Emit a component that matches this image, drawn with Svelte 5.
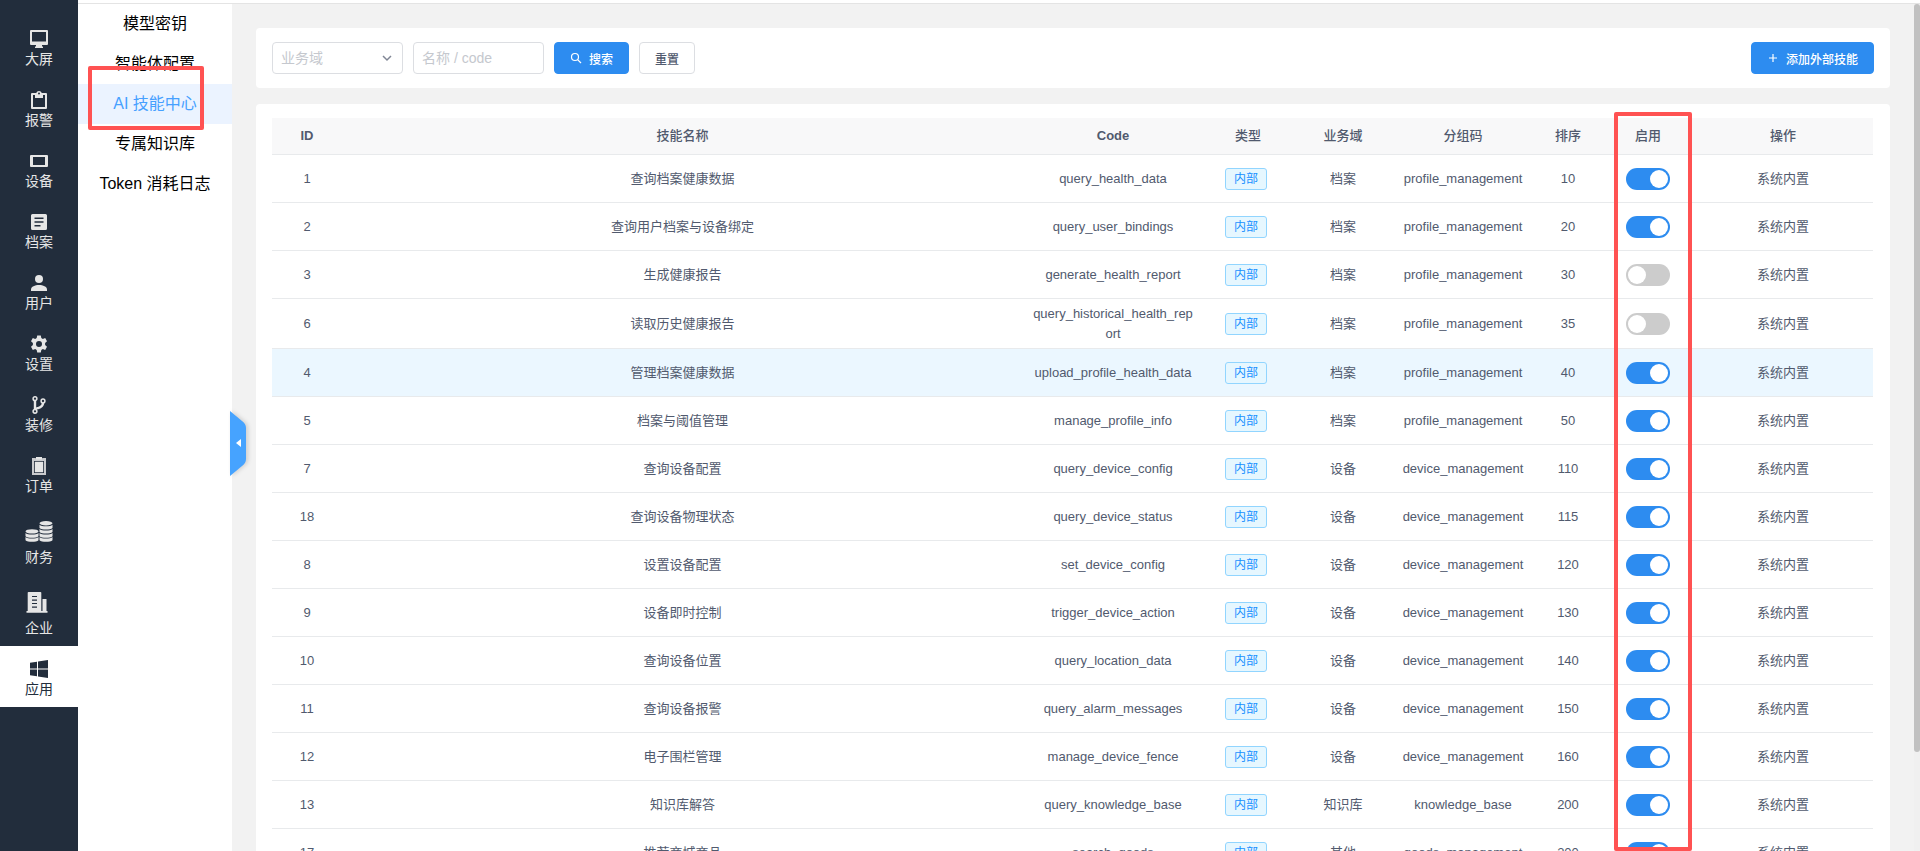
<script lang="ts">
  type Skill = {
    id: number;
    name: string;
    code: string;
    domain: string;
    group: string;
    sort: number;
    enabled: boolean;
  };

  const mainMenu = [
    { label: '大屏', icon: 'screen' },
    { label: '报警', icon: 'alarm' },
    { label: '设备', icon: 'device' },
    { label: '档案', icon: 'archive' },
    { label: '用户', icon: 'user' },
    { label: '设置', icon: 'setting' },
    { label: '装修', icon: 'branch' },
    { label: '订单', icon: 'order' },
    { label: '财务', icon: 'finance', large: true },
    { label: '企业', icon: 'company', large: true },
    { label: '应用', icon: 'app' }
  ];
  const subMenu = ['模型密钥', '智能体配置', 'AI 技能中心', '专属知识库', 'Token 消耗日志'];

  let activeMain = '应用';
  let activeSub = 'AI 技能中心';
  let domain = '';
  let keyword = '';
  let hoverId = 4;

  const profile = { domain: '档案', group: 'profile_management' };
  const device = { domain: '设备', group: 'device_management' };

  let skills: Skill[] = [
    { id: 1, name: '查询档案健康数据', code: 'query_health_data', ...profile, sort: 10, enabled: true },
    { id: 2, name: '查询用户档案与设备绑定', code: 'query_user_bindings', ...profile, sort: 20, enabled: true },
    { id: 3, name: '生成健康报告', code: 'generate_health_report', ...profile, sort: 30, enabled: false },
    { id: 6, name: '读取历史健康报告', code: 'query_historical_health_report', ...profile, sort: 35, enabled: false },
    { id: 4, name: '管理档案健康数据', code: 'upload_profile_health_data', ...profile, sort: 40, enabled: true },
    { id: 5, name: '档案与阈值管理', code: 'manage_profile_info', ...profile, sort: 50, enabled: true },
    { id: 7, name: '查询设备配置', code: 'query_device_config', ...device, sort: 110, enabled: true },
    { id: 18, name: '查询设备物理状态', code: 'query_device_status', ...device, sort: 115, enabled: true },
    { id: 8, name: '设置设备配置', code: 'set_device_config', ...device, sort: 120, enabled: true },
    { id: 9, name: '设备即时控制', code: 'trigger_device_action', ...device, sort: 130, enabled: true },
    { id: 10, name: '查询设备位置', code: 'query_location_data', ...device, sort: 140, enabled: true },
    { id: 11, name: '查询设备报警', code: 'query_alarm_messages', ...device, sort: 150, enabled: true },
    { id: 12, name: '电子围栏管理', code: 'manage_device_fence', ...device, sort: 160, enabled: true },
    { id: 13, name: '知识库解答', code: 'query_knowledge_base', domain: '知识库', group: 'knowledge_base', sort: 200, enabled: true },
    { id: 17, name: '推荐商城商品', code: 'search_goods', domain: '其他', group: 'goods_management', sort: 200, enabled: true }
  ];

  function resetFilter() {
    domain = '';
    keyword = '';
  }
</script>

<div class="layout">
  <nav class="main-nav">
    {#each mainMenu as item}
      <a href="#{item.icon}" class="main-item" class:active={item.label === activeMain} on:click={() => (activeMain = item.label)}>
        <svg class:large={item.large} viewBox={item.large ? '0 0 28 28' : '0 0 18 18'} aria-hidden="true">
          {#if item.icon === 'screen'}
            <path fill-rule="evenodd" d="M1 0h16a1 1 0 0 1 1 1v13a1 1 0 0 1-1 1h-5v1l1 1v1H5v-1l1-1v-1H1a1 1 0 0 1-1-1V1a1 1 0 0 1 1-1zM2 2v9.500h14V2z" />
          {:else if item.icon === 'alarm'}
            <path fill-rule="evenodd" d="M2 2h4.200a3 3 0 0 1 5.600 0H16a1 1 0 0 1 1 1v14a1 1 0 0 1-1 1H2a1 1 0 0 1-1-1V3a1 1 0 0 1 1-1zM3 4v12h12V4h-2v3H5V4zM9 1.500a1 1 0 1 0 0 2 1 1 0 0 0 0-2z" />
          {:else if item.icon === 'device'}
            <path fill-rule="evenodd" d="M1 3h16a1 1 0 0 1 1 1v10a1 1 0 0 1-1 1H1a1 1 0 0 1-1-1V4a1 1 0 0 1 1-1zM3 5v8h12V5z" />
          {:else if item.icon === 'archive'}
            <path fill-rule="evenodd" d="M2.500 1h13A1.500 1.500 0 0 1 17 2.500v13a1.500 1.500 0 0 1-1.500 1.500h-13A1.500 1.500 0 0 1 1 15.500v-13A1.500 1.500 0 0 1 2.500 1zM4.500 4.500V6h9V4.500zM4.500 8.300v1.500h9V8.300zM4.500 12v1.500h6V12z" />
          {:else if item.icon === 'user'}
            <circle cx="9" cy="5" r="4" />
            <path d="M1 17v-1.500C1 12.500 5 11 9 11s8 1.500 8 4.500V17z" />
          {:else if item.icon === 'setting'}
            <path fill-rule="evenodd" d="M7.200 .5h3.600l.5 2.500 1.500.9 2.400-.8L17 6.200l-1.900 1.700v2.200l1.900 1.700-1.800 3.100-2.400-.8-1.500.9-.5 2.500H7.200L6.700 15l-1.500-.9-2.400.8L1 11.800l1.900-1.700V7.900L1 6.200l1.800-3.100 2.400.8L6.700 3zM9 6a3 3 0 1 0 0 6 3 3 0 0 0 0-6z" />
          {:else if item.icon === 'branch'}
            <g fill="none" stroke="currentColor" stroke-width="1.500">
              <circle cx="5" cy="2.700" r="1.900" />
              <circle cx="5" cy="15.300" r="1.900" />
              <circle cx="13" cy="5" r="1.900" />
              <path stroke-width="2.400" d="M5 4.600v8.800M13 7c0 4-3 4.500-5.500 5.200-1.500.4-2.200.8-2.500 1.500" />
            </g>
          {:else if item.icon === 'order'}
            <path fill-rule="evenodd" d="M2 1h3.500l1 1h5l1-1H16v17H2zM4 4v12h10V4z" opacity=".85" />
            <path d="M4.800 4.800h8.400v10.400H4.800zM6 0h6v2.500H6z" />
          {:else if item.icon === 'finance'}
            <ellipse cx="21" cy="5.200" rx="6.500" ry="2.200" />
            <path d="M14.500 6.800c2 2 11 2 13 0v3.200c-2 2-11 2-13 0zM14.500 10.900c2 2 11 2 13 0v3.200c-2 2-11 2-13 0zM14.500 15c2 2 11 2 13 0v3.200c-2 2-11 2-13 0zM14.500 19.100c2 2 11 2 13 0v3.200c-2 2-11 2-13 0z" />
            <ellipse cx="7" cy="13.400" rx="6.500" ry="2.200" />
            <path d="M.5 15c2 2 11 2 13 0v3.200c-2 2-11 2-13 0zM.5 19.100c2 2 11 2 13 0v3.200c-2 2-11 2-13 0z" />
          {:else if item.icon === 'company'}
            <path fill-rule="evenodd" d="M3.500 3h12a.8.8 0 0 1 .8.8V22.500H2.700V3.800a.8.8 0 0 1 .8-.8zM7 7v1h5V7zM7 10.500v1.200h5v-1.200zM7 14v1h5v-1zM7 17.500v1.200h5v-1.200z" />
            <path d="M17.500 10h4v12.500h-4zM1.500 22h21v1.700h-21z" />
          {:else}
            <path d="M0 2.700l7-1v6.800H0zM8 1.500L18 0v8.500H8zM0 9.500h7v6.700l-7-1zM8 9.500h10V18L8 16.400z" />
          {/if}
        </svg>
        <span>{item.label}</span>
      </a>
    {/each}
  </nav>

  <div class="page">
    <header class="topbar"></header>
    <div class="body">
      <aside class="sub-nav">
        {#each subMenu as item}
          <a href="#sub" class="sub-item" class:active={item === activeSub} on:click={() => (activeSub = item)}>
            {item}
            {#if item === 'AI 技能中心'}<i class="mark mark-menu"></i>{/if}
          </a>
        {/each}
        <button class="collapse" aria-label="收起菜单">
          <svg viewBox="0 0 16 65" aria-hidden="true">
            <path fill="#46a3ff" d="M0 0l12 10q4 3 4 7v31q0 4-4 7L0 65z" />
            <path fill="#fff" d="M11 28v8l-5-4z" />
          </svg>
        </button>
      </aside>

      <main class="content">
        <section class="card filter">
          <div class="field select-box">
            <select aria-label="业务域" bind:value={domain} class:empty={!domain}>
              <option value="">业务域</option>
              <option>档案</option>
              <option>设备</option>
              <option>知识库</option>
              <option>其他</option>
            </select>
            <svg viewBox="0 0 10 10" aria-hidden="true"><path d="M1 3l4 4 4-4" /></svg>
          </div>
          <input class="field" type="text" aria-label="名称 / code" placeholder="名称 / code" bind:value={keyword} />
          <button class="btn primary">
            <svg viewBox="0 0 12 12" aria-hidden="true"><circle cx="5" cy="5" r="3.500" /><path d="M7.600 7.600L11 11" /></svg>
            <span>搜索</span>
          </button>
          <button class="btn" on:click={resetFilter}>重置</button>
          <button class="btn primary add">
            <svg viewBox="0 0 12 12" aria-hidden="true"><path d="M6 2v8M2 6h8" /></svg>
            <span>添加外部技能</span>
          </button>
        </section>

        <section class="card list">
          <table>
            <colgroup>
              <col class="w70" /><col /><col class="w180" /><col class="w90" /><col class="w100" />
              <col class="w140" /><col class="w70" /><col class="w90" /><col class="w180" />
            </colgroup>
            <thead>
              <tr>
                <th class="latin">ID</th>
                <th>技能名称</th>
                <th class="latin">Code</th>
                <th>类型</th>
                <th>业务域</th>
                <th>分组码</th>
                <th>排序</th>
                <th>启用</th>
                <th>操作</th>
              </tr>
            </thead>
            <tbody>
              {#each skills as skill (skill.id)}
                <tr class:hover={skill.id === hoverId} on:mouseenter={() => (hoverId = skill.id)}>
                  <td>{skill.id}</td>
                  <td>{skill.name}</td>
                  <td class="code">{skill.code}</td>
                  <td><span class="tag">内部</span></td>
                  <td>{skill.domain}</td>
                  <td class="group">{skill.group}</td>
                  <td>{skill.sort}</td>
                  <td><input class="switch" type="checkbox" role="switch" aria-label="启用 {skill.name}" bind:checked={skill.enabled} /></td>
                  <td>系统内置</td>
                </tr>
              {/each}
            </tbody>
          </table>
          <i class="mark mark-column"></i>
        </section>
      </main>

      <div class="scrollbar" aria-hidden="true"><div class="thumb"></div></div>
    </div>
  </div>
</div>

<style>
  :global(body) {
    margin: 0;
    font-family: "Liberation Sans", "Noto Sans CJK SC", sans-serif;
    color: #515a6e;
  }

  .layout, .layout * { box-sizing: border-box; }

  .layout {
    display: flex;
    height: 100vh;
    overflow: hidden;
    background: #f2f2f2;
  }

  a { text-decoration: none; }

  .main-nav {
    flex: none;
    width: 78px;
    padding-top: 16px;
    background: #222d3c;
  }

  .main-item {
    display: flex;
    flex-direction: column;
    align-items: center;
    padding: 14px 0 7px;
    font-size: 14px;
    line-height: 22px;
    color: #e6e6e6;
  }

  .main-item.active {
    background: #fff;
    color: #222d3c;
  }

  .main-item svg {
    width: 18px;
    height: 18px;
    fill: currentColor;
  }

  .main-item svg.large {
    width: 28px;
    height: 28px;
  }

  .page {
    flex: 1;
    min-width: 0;
    display: flex;
    flex-direction: column;
  }

  .topbar {
    flex: none;
    height: 4px;
    background: #fff;
    border-bottom: 1px solid #e4e4e4;
  }

  .body {
    flex: 1;
    min-height: 0;
    display: flex;
  }

  .sub-nav {
    position: relative;
    flex: none;
    width: 154px;
    background: #fff;
  }

  .sub-item {
    position: relative;
    display: block;
    font-size: 16px;
    line-height: 40px;
    text-align: center;
    color: #000;
  }

  .sub-item.active {
    background: #ebf3ff;
    color: #46a0ff;
  }

  .mark {
    position: absolute;
    border: 4px solid #ff5252;
    border-radius: 2px;
    pointer-events: none;
    z-index: 2;
  }

  .mark-menu {
    inset: -18px 28px -6px 10px;
  }

  .mark-column {
    top: 8px;
    right: 198px;
    width: 78px;
    height: calc(100vh - 112px);
  }

  .collapse {
    position: absolute;
    top: 407px;
    right: -14px;
    width: 16px;
    height: 65px;
    padding: 0;
    border: 0;
    background: none;
    cursor: pointer;
  }

  .collapse svg {
    display: block;
    width: 16px;
    height: 65px;
    overflow: visible;
    filter: drop-shadow(2px 0 2px rgba(0, 0, 0, 0.15));
  }

  .content {
    flex: 1;
    min-width: 0;
    padding: 24px;
    overflow: hidden;
  }

  .card {
    background: #fff;
    border-radius: 4px;
  }

  .filter {
    display: flex;
    gap: 10px;
    padding: 14px 16px;
    margin-bottom: 16px;
  }

  .field {
    width: 131px;
    height: 32px;
    padding: 0 8px;
    border: 1px solid #dcdee2;
    border-radius: 4px;
    background: #fff;
    font: inherit;
    font-size: 14px;
    color: #515a6e;
  }

  .field::placeholder { color: #c5c8ce; opacity: 1; }

  .select-box {
    display: flex;
    align-items: center;
  }

  .select-box select {
    flex: 1;
    min-width: 0;
    padding: 0;
    border: 0;
    outline: 0;
    appearance: none;
    background: none;
    font: inherit;
    color: #515a6e;
  }

  .select-box select.empty { color: #c5c8ce; }

  .select-box svg {
    width: 10px;
    height: 10px;
    margin-right: 2px;
    fill: none;
    stroke: #808695;
    stroke-width: 1.5;
  }

  .btn {
    display: flex;
    align-items: center;
    gap: 7px;
    height: 32px;
    padding: 0 15px;
    border: 1px solid #dcdee2;
    border-radius: 4px;
    background: #fff;
    font: inherit;
    font-size: 12px;
    font-weight: 500;
    color: #515a6e;
    cursor: pointer;
  }

  .btn svg {
    width: 12px;
    height: 12px;
    fill: none;
    stroke: currentColor;
    stroke-width: 1.2;
  }

  .btn.primary {
    border-color: #2d8cf0;
    background: #2d8cf0;
    color: #fff;
  }

  .btn.add { margin-left: auto; }

  .list {
    position: relative;
    padding: 14px 17px 14px 16px;
  }

  table {
    width: 100%;
    table-layout: fixed;
    border-collapse: separate;
    border-spacing: 0;
    font-size: 13px;
    line-height: 20px;
    text-align: center;
  }

  .w70 { width: 70px; }
  .w90 { width: 90px; }
  .w100 { width: 100px; }
  .w140 { width: 140px; }
  .w180 { width: 180px; }

  th {
    height: 37px;
    padding: 0;
    border-bottom: 1px solid #e8eaec;
    background: #f8f8f9;
    font-weight: 500;
  }

  th.latin { font-weight: 700; }

  td {
    height: 48px;
    padding: 5px 8px 4px;
    border-bottom: 1px solid #e8eaec;
  }

  .code { word-break: break-all; }
  .group { white-space: nowrap; }
  tr.hover td { background: #ebf7ff; }

  .tag {
    display: inline-block;
    height: 22px;
    margin-right: 4px;
    padding: 0 8px;
    border: 1px solid #91d5ff;
    border-radius: 3px;
    background: #e6f7ff;
    font-size: 12px;
    line-height: 20px;
    color: #1890ff;
    vertical-align: middle;
  }

  .switch {
    display: block;
    width: 44px;
    height: 22px;
    margin: 0 auto;
    padding: 2px;
    appearance: none;
    border-radius: 11px;
    background: #ccc;
    cursor: pointer;
  }

  .switch::before {
    content: '';
    display: block;
    width: 18px;
    height: 18px;
    border-radius: 50%;
    background: #fff;
  }

  .switch:checked { background: #2d8cf0; }
  .switch:checked::before { margin-left: auto; }

  .scrollbar {
    flex: none;
    width: 6px;
    background: #f0f0f0;
  }

  .thumb {
    height: 88.3%;
    border-radius: 3px;
    background: #c1c1c1;
  }
</style>
